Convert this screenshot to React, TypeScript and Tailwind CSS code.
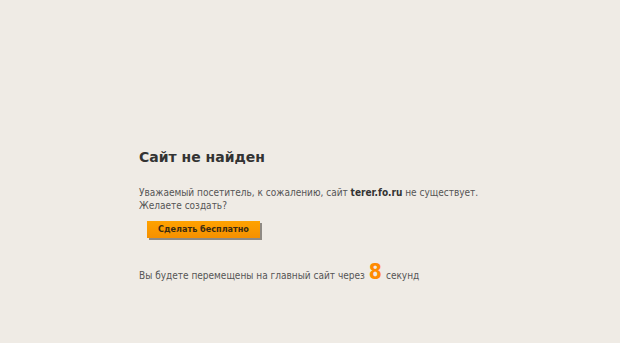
import React from 'react';

export default function App() {
  return (
    <div className="w-[620px] h-[343px] bg-[#efebe5] font-['DejaVu_Sans_Condensed','DejaVu_Sans',sans-serif] text-[#555]">
      <div className="pl-[139px] pt-[148px]">
        {/* Title */}
        <h1 className="font-['DejaVu_Sans',sans-serif] text-[14px] font-bold leading-[18px] text-[#333]">Сайт не найден</h1>

        {/* Message */}
        <p className="mt-[20px] text-[10px] leading-[13px]">
          Уважаемый посетитель, к сожалению, сайт <b className="text-[#333]">terer.fo.ru</b> не существует.
          <br />
          Желаете создать?
        </p>

        {/* Button */}
        <div className="mt-[9px] ml-[8px] flex">
          <button className="w-[113px] h-[17px] bg-gradient-to-b from-[#ffa200] to-[#f59000] text-[9px] font-semibold text-[#3a2a10] leading-[17px] shadow-[2px_2px_0_#8f8a84]">
            Сделать бесплатно
          </button>
        </div>

        {/* Redirect */}
        <p className="mt-[22px] text-[10px] leading-[24px] flex items-baseline">
          <span>Вы будете перемещены на главный сайт через</span>
          <span className="mx-[4px] text-[21px] font-bold text-[#ff8a00]">8</span>
          <span>секунд</span>
        </p>
      </div>
    </div>
  );
}
